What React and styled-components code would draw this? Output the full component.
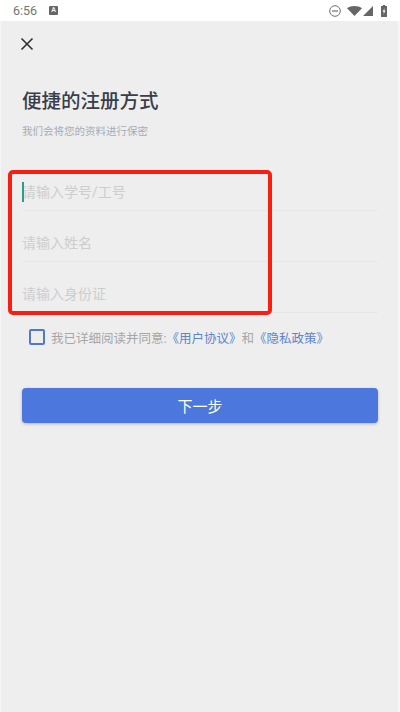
import React from "react";
import styled, { createGlobalStyle } from "styled-components";

const GlobalStyle = createGlobalStyle`
  html, body {
    margin: 0;
    padding: 0;
    background: #eeeeee;
  }
  body {
    font-family: "Roboto", "Noto Sans CJK SC", sans-serif;
  }
`;

const Screen = styled.div`
  position: relative;
  width: 400px;
  height: 712px;
  overflow: hidden;
  background: #eeeeee;
  display: flex;
  flex-direction: column;
`;

const StatusBar = styled.div`
  height: 21px;
  background: #ffffff;
  display: flex;
  align-items: center;
  padding: 0 13px;
  color: #757575;
`;

const Time = styled.span`
  font-size: 12.5px;
  line-height: 21px;
  width: 36px;
`;

const NotificationIcon = styled.span`
  width: 9px;
  height: 9px;
  background: #666666;
  border-radius: 1px;
  color: #eeeeee;
  font-size: 7px;
  line-height: 9px;
  font-weight: 700;
  text-align: center;
`;

const StatusRight = styled.div`
  margin-left: auto;
  display: flex;
  align-items: center;
`;

const StatusIcon = styled.svg`
  display: block;
  margin-left: ${(p) => p.$gap || 0}px;
`;

const Content = styled.main`
  flex: 1;
  display: flex;
  flex-direction: column;
  padding: 0 20px 0 21px;
  border-left: 1px solid #f6f6f6;
  border-right: 2px solid #f6f6f6;
`;

const CloseButton = styled.button`
  border: 0;
  background: none;
  padding: 0;
  width: 14px;
  height: 14px;
  margin: 16px 0 0 -2px;
  display: block;
`;

const Title = styled.h1`
  margin: 37px 0 0;
  font-size: 19.5px;
  line-height: 28px;
  font-weight: 500;
  color: #3a3d4a;
`;

const Subtitle = styled.p`
  margin: 8px 0 0;
  font-size: 10.5px;
  line-height: 16px;
  color: #a5acb8;
`;

const Form = styled.div`
  margin-top: 20px;
`;

const Field = styled.div`
  position: relative;
  box-sizing: border-box;
  height: 51px;
  padding-top: 12px;
  border-bottom: 1px solid #e6e6e6;
  display: flex;
  align-items: center;
  font-size: 14px;
  color: #cdcdcd;
`;

const Caret = styled.span`
  position: absolute;
  left: 0;
  top: 22px;
  width: 2px;
  height: 20px;
  background: #2a9d8f;
`;

const Agreement = styled.div`
  display: flex;
  align-items: center;
  margin: 16px 0 0 7px;
  height: 16px;
  font-size: 12.5px;
  color: #a6a6a6;
  white-space: nowrap;
`;

const Checkbox = styled.span`
  box-sizing: border-box;
  width: 16px;
  height: 16px;
  border: 2px solid #4f78d6;
  border-radius: 2px;
  margin-right: 6px;
  flex: none;
`;

const AgreementLink = styled.span`
  color: #5d84cf;
`;

const NextButton = styled.button`
  margin-top: 43px;
  height: 35px;
  width: 100%;
  border: 0;
  border-radius: 4px;
  background: #4c78dd;
  box-shadow: 0 1px 3px rgba(0, 0, 0, 0.25);
  color: #ffffff;
  font-family: inherit;
  font-size: 15px;
`;

const Annotation = styled.div`
  position: absolute;
  left: 8px;
  top: 170px;
  width: 264px;
  height: 145px;
  box-sizing: border-box;
  border: 4.5px solid #f81f12;
  border-radius: 5px;
  pointer-events: none;
`;

const App = () => {
  return (
    <Screen>
      <GlobalStyle />
      <StatusBar>
        <Time>6:56</Time>
        <NotificationIcon>A</NotificationIcon>
        <StatusRight>
          <StatusIcon width="12" height="12" viewBox="0 0 12 12">
            <circle cx="6" cy="6" r="5.3" fill="none" stroke="#6f6f6f" strokeWidth="1" />
            <rect x="3" y="5.4" width="6" height="1.2" fill="#6f6f6f" />
          </StatusIcon>
          <StatusIcon $gap={6} width="15" height="10" viewBox="0 0 15 10">
            <path d="M0 2.3C4 -0.7 11 -0.7 15 2.3L7.5 10Z" fill="#666666" />
          </StatusIcon>
          <StatusIcon $gap={1} width="10" height="10" viewBox="0 0 10 10">
            <path d="M10 0V10H0Z" fill="#666666" />
          </StatusIcon>
          <StatusIcon $gap={8} width="6" height="12" viewBox="0 0 6 12">
            <path d="M1.8 0H4.2V1H6V12H0V1H1.8Z" fill="#666666" />
            <path d="M3.6 3L1.6 6.8H2.9L2.5 9.6L4.5 5.6H3.2Z" fill="#ffffff" />
          </StatusIcon>
        </StatusRight>
      </StatusBar>
      <Content>
        <CloseButton aria-label="close">
          <svg width="14" height="14" viewBox="0 0 14 14">
            <path d="M1.5 1.5L12.5 12.5M12.5 1.5L1.5 12.5" stroke="#2f2f2f" strokeWidth="1.6" fill="none" />
          </svg>
        </CloseButton>
        <Title>便捷的注册方式</Title>
        <Subtitle>我们会将您的资料进行保密</Subtitle>
        <Form>
          <Field>
            <Caret />
            请输入学号/工号
          </Field>
          <Field>请输入姓名</Field>
          <Field>请输入身份证</Field>
        </Form>
        <Agreement>
          <Checkbox />
          我已详细阅读并同意:
          <AgreementLink>《用户协议》</AgreementLink>和
          <AgreementLink>《隐私政策》</AgreementLink>
        </Agreement>
        <NextButton>下一步</NextButton>
      </Content>
      <Annotation />
    </Screen>
  );
};

export default App;
